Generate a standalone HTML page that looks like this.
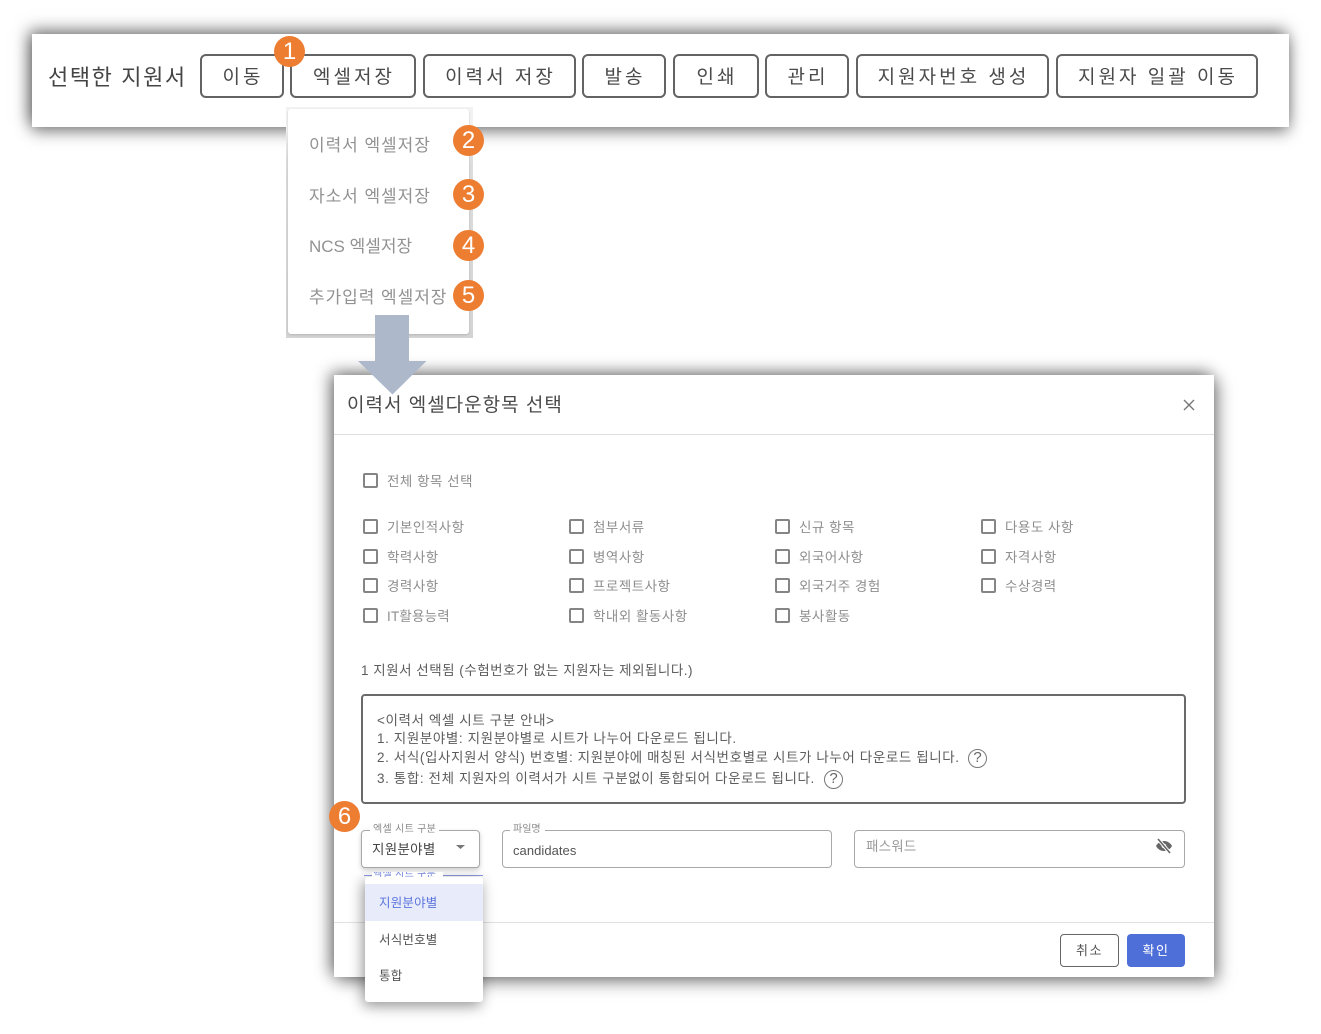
<!DOCTYPE html>
<html lang="ko"><head><meta charset="utf-8"><style>
html,body{margin:0;padding:0;background:#fff}
#r{position:relative;width:1321px;height:1034px;overflow:hidden;background:#fff;font-family:"Liberation Sans","Noto Sans CJK KR",sans-serif}
#r div,#r span.t{position:absolute;box-sizing:border-box}
.t{white-space:nowrap;line-height:1;filter:blur(.35px)}
.b{border:2px solid #636363;border-radius:6px;background:#fff;top:54px;height:44px;color:#4a4a4a;font-size:19px;text-align:center;line-height:44px;white-space:nowrap;letter-spacing:3px;text-indent:2px}
.n{width:31px;height:31px;border-radius:50%;background:#ed7d31;color:#fff;font-size:24px;line-height:31px;text-align:center}
.c{width:15px;height:15px;border:2px solid #858585;border-radius:2px}
.l{font-size:13.5px;color:#8e8e8e;letter-spacing:.5px}
.i{font-size:13.5px;color:#5c5c5c;letter-spacing:.6px;left:377px}
.m{font-size:17px;color:#929292;letter-spacing:.95px;left:309px}
.f{border:1px solid #a8a8a8;border-radius:4px;top:830px;height:38px;background:#fff}
</style></head><body><div id="r">

<div style="left:32px;top:34px;width:1257px;height:93px;background:#fff;box-shadow:-3px -4px 15px rgba(0,0,0,.5),0 6px 14px rgba(0,0,0,.35)"></div>
<span class="t" style="left:48px;top:67px;font-size:22px;color:#444;letter-spacing:1.6px">선택한 지원서</span>
<div class="b" style="left:200px;width:84px">이동</div>
<div class="b" style="left:290px;width:126px">엑셀저장</div>
<div class="b" style="left:423px;width:153px">이력서 저장</div>
<div class="b" style="left:582px;width:84px">발송</div>
<div class="b" style="left:673px;width:86px">인쇄</div>
<div class="b" style="left:765px;width:84px">관리</div>
<div class="b" style="left:856px;width:193px">지원자번호 생성</div>
<div class="b" style="left:1056px;width:202px">지원자 일괄 이동</div>

<div style="left:286px;top:107px;width:187px;height:231px;background:linear-gradient(#f2f2f2,#f2f2f2 10%,#dcdcdc 25%,#d4d4d4)"></div>
<div style="left:288px;top:109px;width:181px;height:225px;background:#fff;border-radius:3px;box-shadow:0 1px 2px rgba(0,0,0,.15)"></div>
<span class="t m" style="top:137px">이력서 엑셀저장</span>
<span class="t m" style="top:188px">자소서 엑셀저장</span>
<span class="t m" style="top:238px;letter-spacing:0">NCS 엑셀저장</span>
<span class="t m" style="top:289px">추가입력 엑셀저장</span>

<div style="left:334px;top:375px;width:880px;height:602px;background:#fff;box-shadow:-4px -3px 15px rgba(0,0,0,.45),4px 5px 16px rgba(0,0,0,.4)"></div>
<div style="left:334px;top:434px;width:880px;height:1px;background:#dedede"></div>
<div style="left:334px;top:922px;width:880px;height:1px;background:#e2e2e2"></div>
<span class="t" style="left:347px;top:396px;font-size:19px;color:#4a4a4a;letter-spacing:1px">이력서 엑셀다운항목 선택</span>
<svg style="position:absolute;left:1183px;top:399px" width="12" height="12" viewBox="0 0 12 12"><path d="M1 1L11 11M11 1L1 11" stroke="#777" stroke-width="1.400" fill="none"/></svg>

<svg style="position:absolute;left:358px;top:315px" width="69" height="80" viewBox="0 0 69 80"><path d="M17 0H51V46H68.500L34.500 79.500L0 46H17Z" fill="#adb9ca"/></svg>

<div class="c" style="left:363px;top:473px"></div><span class="t l" style="left:387px;top:475px">전체 항목 선택</span>

<div class="c" style="left:363px;top:519px"></div><span class="t l" style="left:387px;top:521px">기본인적사항</span>
<div class="c" style="left:363px;top:549px"></div><span class="t l" style="left:387px;top:551px">학력사항</span>
<div class="c" style="left:363px;top:578px"></div><span class="t l" style="left:387px;top:580px">경력사항</span>
<div class="c" style="left:363px;top:608px"></div><span class="t l" style="left:387px;top:610px;letter-spacing:.2px">IT활용능력</span>

<div class="c" style="left:569px;top:519px"></div><span class="t l" style="left:593px;top:521px">첨부서류</span>
<div class="c" style="left:569px;top:549px"></div><span class="t l" style="left:593px;top:551px">병역사항</span>
<div class="c" style="left:569px;top:578px"></div><span class="t l" style="left:593px;top:580px">프로젝트사항</span>
<div class="c" style="left:569px;top:608px"></div><span class="t l" style="left:593px;top:610px">학내외 활동사항</span>

<div class="c" style="left:775px;top:519px"></div><span class="t l" style="left:799px;top:521px">신규 항목</span>
<div class="c" style="left:775px;top:549px"></div><span class="t l" style="left:799px;top:551px">외국어사항</span>
<div class="c" style="left:775px;top:578px"></div><span class="t l" style="left:799px;top:580px">외국거주 경험</span>
<div class="c" style="left:775px;top:608px"></div><span class="t l" style="left:799px;top:610px">봉사활동</span>

<div class="c" style="left:981px;top:519px"></div><span class="t l" style="left:1005px;top:521px">다용도 사항</span>
<div class="c" style="left:981px;top:549px"></div><span class="t l" style="left:1005px;top:551px">자격사항</span>
<div class="c" style="left:981px;top:578px"></div><span class="t l" style="left:1005px;top:580px">수상경력</span>

<span class="t" style="left:361px;top:664px;font-size:13.5px;color:#5c5c5c;letter-spacing:.5px">1 지원서 선택됨 (수험번호가 없는 지원자는 제외됩니다.)</span>

<div style="left:361px;top:694px;width:825px;height:110px;border:2px solid #6a6a6a;border-radius:4px"></div>
<span class="t i" style="top:714px">&lt;이력서 엑셀 시트 구분 안내&gt;</span>
<span class="t i" style="top:732px">1. 지원분야별: 지원분야별로 시트가 나누어 다운로드 됩니다.</span>
<span class="t i" style="top:751px">2. 서식(입사지원서 양식) 번호별: 지원분야에 매칭된 서식번호별로 시트가 나누어 다운로드 됩니다.</span>
<span class="t i" style="top:772px">3. 통합: 전체 지원자의 이력서가 시트 구분없이 통합되어 다운로드 됩니다.</span>
<div style="left:968px;top:749px;width:19px;height:19px;border:1.5px solid #777;border-radius:50%;color:#666;font-size:15px;line-height:16px;text-align:center">?</div>
<div style="left:824px;top:770px;width:19px;height:19px;border:1.5px solid #777;border-radius:50%;color:#666;font-size:15px;line-height:16px;text-align:center">?</div>

<div class="f" style="left:361px;width:119px;box-shadow:0 2px 5px rgba(0,0,0,.2)"></div>
<div style="left:370px;top:826px;width:69px;height:8px;background:#fff"></div>
<span class="t" style="left:373px;top:825px;font-size:10px;color:#888;letter-spacing:.3px">엑셀 시트 구분</span>
<span class="t" style="left:372px;top:843px;font-size:13.5px;color:#444;letter-spacing:.3px">지원분야별</span>
<svg style="position:absolute;left:456px;top:845px" width="9" height="4"><path d="M0 0H9L4.500 4Z" fill="#777"/></svg>

<div class="f" style="left:502px;width:330px"></div>
<div style="left:510px;top:826px;width:35px;height:8px;background:#fff"></div>
<span class="t" style="left:513px;top:825px;font-size:10px;color:#888">파일명</span>
<span class="t" style="left:513px;top:844px;font-size:13px;color:#555;letter-spacing:.05px">candidates</span>

<div class="f" style="left:854px;width:331px"></div>
<span class="t" style="left:866px;top:840px;font-size:13.5px;color:#999;letter-spacing:.2px">패스워드</span>
<svg style="position:absolute;left:1155px;top:837px" width="18" height="18" viewBox="0 0 18 18"><path d="M1 9C3 5.500 6 4 9 4C12 4 15 5.500 17 9C15 12.500 12 14 9 14C6 14 3 12.500 1 9Z" fill="#666"/><circle cx="9" cy="9" r="2.300" fill="#fff"/><path d="M3 2L15 16" stroke="#fff" stroke-width="3.500"/><path d="M3 2L15 16" stroke="#666" stroke-width="1.600"/></svg>

<div style="left:1060px;top:934px;width:59px;height:33px;border:1px solid #666;border-radius:4px;background:#fff;color:#555;font-size:13px;line-height:31px;text-align:center;letter-spacing:1.500px">취소</div>
<div style="left:1127px;top:934px;width:58px;height:33px;border-radius:4px;background:#4e6fd8;color:#fff;font-size:13px;line-height:33px;text-align:center;letter-spacing:1.500px">확인</div>

<div style="left:364px;top:875px;width:119px;height:2px;border-top:1px solid #8c9be0"></div>
<div style="left:365px;top:877px;width:118px;height:125px;background:#fff;border-radius:3px;box-shadow:-2px 4px 14px rgba(0,0,0,.42)"></div>
<div style="left:372px;top:872px;width:71px;height:5px;overflow:hidden;background:#fff"><span class="t" style="position:absolute;left:1px;top:-2px;font-size:10px;color:#6f83d8;letter-spacing:.3px">엑셀 시트 구분</span></div>
<div style="left:365px;top:884px;width:118px;height:37px;background:#e8ebfa"></div>
<span class="t" style="left:379px;top:897px;font-size:12.5px;color:#5b74dc;letter-spacing:.2px">지원분야별</span>
<span class="t" style="left:379px;top:934px;font-size:12.5px;color:#555;letter-spacing:.2px">서식번호별</span>
<span class="t" style="left:379px;top:970px;font-size:12.5px;color:#555;letter-spacing:.2px">통합</span>

<div class="n" style="left:274px;top:36px">1</div>
<div class="n" style="left:453px;top:125px">2</div>
<div class="n" style="left:453px;top:179px">3</div>
<div class="n" style="left:453px;top:230px">4</div>
<div class="n" style="left:453px;top:280px">5</div>
<div class="n" style="left:329px;top:801px">6</div>
</div></body></html>
